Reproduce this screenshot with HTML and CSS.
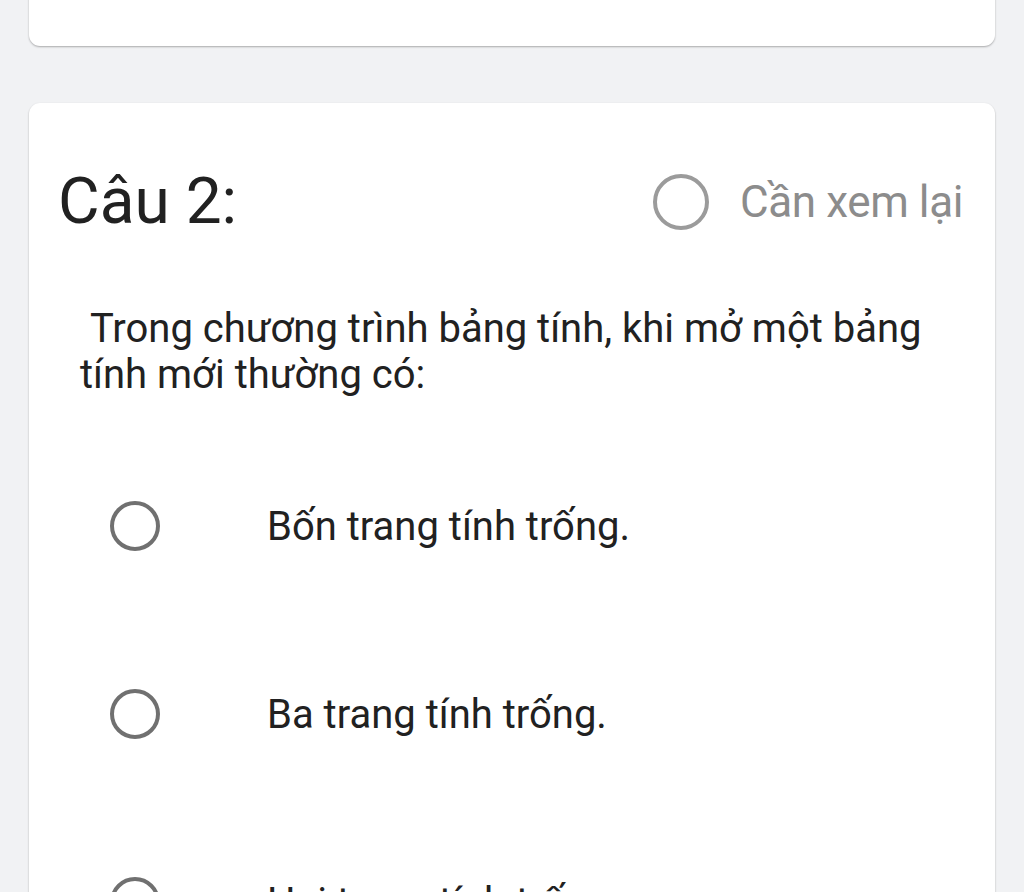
FILE: index.html
```html
<!DOCTYPE html>
<html lang="vi">
<head>
  <meta charset="UTF-8" />
  <meta name="viewport" content="width=device-width, initial-scale=1" />
  <title>Câu 2</title>
  <link rel="stylesheet" href="styles.css">
</head>
<body>
  <div class="card card-prev"></div>

  <div class="card question-card">
    <div class="question-head">
      <h2 class="question-num">Câu 2:</h2>
      <label class="review">
        <span class="radio radio-light"></span>
        <span class="review-text">Cần xem lại</span>
      </label>
    </div>

    <p class="question-text">&nbsp;Trong chương trình bảng tính, khi mở một bảng tính mới thường có:</p>

    <ul class="answers">
      <li class="answer">
        <span class="radio"></span>
        <span class="answer-text">Bốn trang tính trống.</span>
      </li>
      <li class="answer">
        <span class="radio"></span>
        <span class="answer-text">Ba trang tính trống.</span>
      </li>
      <li class="answer">
        <span class="radio"></span>
        <span class="answer-text">Hai trang tính trống.</span>
      </li>
    </ul>
  </div>
</body>
</html>
```

FILE: styles.css
```css
* {
  margin: 0;
  padding: 0;
  box-sizing: border-box;
}

body {
  font-family: Roboto, 'Noto Sans', sans-serif;
  background-color: #f1f2f4;
  color: #212121;
  padding: 0 29px;
  height: 892px;
  overflow: hidden;
}

.card {
  background: #fff;
  border-radius: 11px;
  box-shadow: 0 1px 2px rgba(0, 0, 0, 0.3);
}

.card-prev {
  margin-top: -30px;
  height: 76px;
}

.question-card {
  margin-top: 57px;
  padding: 63px 32px 0 29px;
}

.question-head {
  display: flex;
  justify-content: space-between;
  align-items: center;
}

.question-num {
  font-size: 64px;
  font-weight: 400;
  line-height: 72px;
}

.review {
  display: flex;
  align-items: center;
  gap: 31px;
}

.review-text {
  font-size: 44px;
  letter-spacing: -0.4px;
  color: #8c8c8c;
}

.radio {
  display: block;
  width: 50px;
  height: 50px;
  border: 4px solid #707070;
  border-radius: 50%;
  flex-shrink: 0;
}

.radio-light {
  width: 56px;
  height: 56px;
  border-color: #9b9b9b;
}

.question-text {
  margin-top: 68px;
  padding: 0 22px;
  font-size: 40px;
  line-height: 46px;
}

.answers {
  list-style: none;
  margin-top: 103px;
  padding-left: 52px;
}

.answer {
  display: flex;
  align-items: center;
  gap: 107px;
  height: 50px;
  margin-bottom: 138px;
}

.answer-text {
  font-size: 40px;
}
```
